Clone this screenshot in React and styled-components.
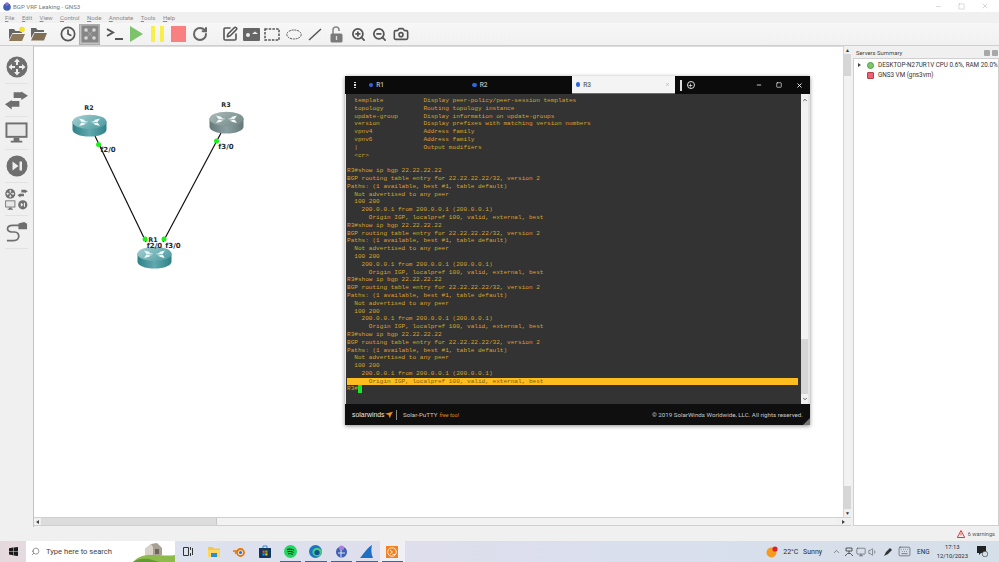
import React from 'react';
import styled, { createGlobalStyle } from 'styled-components';
import {
  ChevronUp,
  Clock,
  Keyboard,
  Monitor,
  Plus,
  RotateCw,
  Search,
  SquarePen,
  Volume1,
  X,
  ZoomIn,
  ZoomOut,
  Camera,
  Minus,
  Square,
} from 'lucide-react';

const GlobalStyle = createGlobalStyle`
  html, body {
    margin: 0;
    padding: 0;
    background: #f0f0f0;
  }
  * {
    box-sizing: border-box;
  }
`;

const Screen = styled.div`
  width: 999px;
  height: 562px;
  display: flex;
  flex-direction: column;
  overflow: hidden;
  font-family: Roboto, 'Open Sans', sans-serif;
  color: #333;
`;

const TitleBar = styled.div`
  height: 12px;
  flex: none;
  display: flex;
  align-items: center;
  background: #fff;
  padding-left: 3px;
  font-size: 6.1px;
  color: #777;
`;

const TitleText = styled.span`
  margin-left: 2px;
  flex: 1;
`;

const WinControls = styled.div`
  display: flex;
  align-items: center;
  gap: 16px;
  padding-right: 10px;
  color: #999;
`;

const MenuBar = styled.div`
  height: 11px;
  flex: none;
  display: flex;
  align-items: center;
  gap: 7.5px;
  padding-left: 5px;
  background: #f0f0f0;
  font-size: 6px;
  color: #8a8a8a;
`;

const MenuItem = styled.span`
  display: inline-block;
  &::first-letter {
    text-decoration: underline;
  }
`;

const Toolbar = styled.div`
  height: 23px;
  flex: none;
  display: flex;
  align-items: center;
  padding-left: 6.3px;
  background: linear-gradient(#f7f7f7, #f1f1f1);
  border-bottom: 1px solid #cfcfcf;
`;

const ToolButton = styled.div`
  width: 21.4px;
  height: 21px;
  flex: none;
  margin-left: ${props => props.$gap || 0}px;
  display: flex;
  align-items: center;
  justify-content: center;
  color: #5a5a5a;
  ${props => props.$active && 'background: #c2c2c2; border: 1px solid #adadad;'}
`;

const Main = styled.div`
  flex: 1;
  min-height: 0;
  display: flex;
`;

const LeftDock = styled.div`
  width: 34px;
  flex: none;
  display: flex;
  flex-direction: column;
  padding-top: 5px;
  background: #f0f0f0;
  border-right: 1px solid #c4c4c4;
`;

const DockItem = styled.div`
  height: 33px;
  margin: 0 5px;
  display: flex;
  align-items: center;
  justify-content: center;
  border-bottom: 1px solid #e2e2e2;
`;

const Center = styled.div`
  flex: 1;
  min-width: 0;
  display: flex;
  flex-direction: column;
  padding-bottom: 1px;
`;

const CanvasRow = styled.div`
  flex: 1;
  min-height: 0;
  display: flex;
`;

const Canvas = styled.div`
  flex: 1;
  position: relative;
  background: #fff;
  border-top: 1px solid #dcdcdc;
`;

const LinksLayer = styled.svg`
  position: absolute;
  left: -34px;
  top: -47px;
  width: 900px;
  height: 500px;
  pointer-events: none;
`;

const NodeImage = styled.svg`
  position: absolute;
  left: ${props => props.$x - 34}px;
  top: ${props => props.$y - 47}px;
`;

const NodeLabel = styled.span`
  position: absolute;
  left: ${props => props.$x - 34}px;
  top: ${props => props.$y - 47}px;
  transform: translate(-50%, -50%);
  font-family: 'DejaVu Sans', sans-serif;
  font-size: ${props => props.$size}px;
  font-weight: 700;
  color: #1c2a30;
  white-space: nowrap;
`;

const VScroll = styled.div`
  width: 8px;
  flex: none;
  display: flex;
  flex-direction: column;
  background: #f0f0f0;
  border-left: 1px solid #d4d4d4;
`;

const ScrollEnd = styled.div`
  flex: none;
  ${props => (props.$size ? `height: ${props.$size}px;` : '')}
  display: flex;
  align-items: center;
  justify-content: center;
  font-size: 5px;
  color: #333;
  background: ${props => (props.$thumb ? '#d6d6d6' : 'transparent')};
`;

const ScrollFill = styled.div`
  flex: 1;
  background: #f2f2f2;
`;

const HScroll = styled.div`
  height: 9px;
  flex: none;
  display: flex;
  background: #f0f0f0;
  border-top: 1px solid #d0d0d0;
  border-bottom: 1px solid #d0d0d0;
`;

const HScrollEnd = styled.div`
  flex: none;
  width: ${props => props.$size}px;
  display: flex;
  align-items: center;
  justify-content: center;
  background: ${props => (props.$thumb ? '#dcdcdc' : 'transparent')};
  border-right: ${props => (props.$thumb ? '1px solid #c8c8c8' : '0')};
`;

const RightDock = styled.div`
  width: 148px;
  flex: none;
  display: flex;
  flex-direction: column;
  padding-left: 2px;
  padding-bottom: 1px;
`;

const DockTitle = styled.div`
  height: 11px;
  flex: none;
  display: flex;
  align-items: center;
  justify-content: space-between;
  padding: 0 1px 0 3px;
  margin-top: 1px;
  font-size: 5.9px;
  color: #444;
`;

const DockButtons = styled.div`
  display: flex;
  gap: 2px;
`;

const DockButton = styled.span`
  width: 6px;
  height: 6px;
  background: #a8a8a8;
  border-radius: 1px;
`;

const ServerTree = styled.div`
  flex: 1;
  background: #fff;
  border: 1px solid #d0d0d0;
  padding-top: 1px;
`;

const ServerRow = styled.div`
  height: 10px;
  display: flex;
  align-items: center;
  padding-left: 4px;
  font-size: 6.3px;
  color: #333;
  white-space: nowrap;
`;

const Expander = styled.span`
  width: 0;
  height: 0;
  border-left: 3px solid #444;
  border-top: 2px solid transparent;
  border-bottom: 2px solid transparent;
  margin-right: ${props => (props.$flush ? 0 : 6)}px;
  ${props => props.$flip && 'transform: rotate(180deg);'}
`;

const ServerIcon = styled.span`
  width: 7px;
  height: 7px;
  margin-left: ${props => (props.$indent ? '9px' : '0')};
  margin-right: 4px;
  background: ${props => props.$color};
  border-radius: ${props => (props.$round ? '50%' : '1px')};
  border: 1px solid ${props => props.$edge};
  flex: none;
`;

const StatusBar = styled.div`
  height: 14px;
  flex: none;
  display: flex;
  align-items: center;
  justify-content: flex-end;
  gap: 2.5px;
  padding-right: 4px;
  background: #f0f0f0;
  font-size: 5.6px;
  color: #555;
`;

const Taskbar = styled.div`
  height: 21px;
  flex: none;
  display: flex;
  align-items: center;
  background: linear-gradient(90deg, #e6d9de 0, #dce2ee 180px, #dfdeec 400px, #dadfee 620px, #d5dfe9 100%);
  font-size: 7px;
  color: #2b2b33;
`;

const StartButton = styled.div`
  width: 26px;
  height: 100%;
  flex: none;
  display: flex;
  align-items: center;
  justify-content: center;
`;

const SearchBox = styled.div`
  width: 149px;
  height: 100%;
  flex: none;
  position: relative;
  overflow: hidden;
  display: flex;
  align-items: center;
  gap: 6px;
  padding-left: 5px;
  background: #fff;
  font-size: 7.6px;
  color: #444;
`;

const SearchArt = styled.svg`
  position: absolute;
  right: 0;
  bottom: 0;
`;

const TaskIcons = styled.div`
  display: flex;
  height: 100%;
  margin-left: 0.5px;
`;

const TaskIcon = styled.div`
  width: 25.5px;
  height: 100%;
  position: relative;
  display: flex;
  align-items: center;
  justify-content: center;
  background: ${props => (props.$active ? '#f0eff3' : 'transparent')};
  &::after {
    content: '';
    position: absolute;
    left: 2px;
    right: 2px;
    bottom: 0;
    height: 1.5px;
    background: ${props => (props.$running ? '#1a6fb5' : 'transparent')};
  }
`;

const Tray = styled.div`
  flex: 1;
  height: 100%;
  display: flex;
  align-items: center;
  justify-content: flex-end;
  padding-right: 11px;
`;

const Weather = styled.span`
  margin: 0 9.5px 0 5px;
  word-spacing: 3px;
`;

const TrayIcon = styled.span`
  display: flex;
  margin-right: ${props => props.$space}px;
  color: #333;
`;

const Clocks = styled.div`
  display: flex;
  flex-direction: column;
  align-items: center;
  line-height: 9px;
  font-size: 5.9px;
  margin: 0 9px 0 7px;
`;

const Lang = styled.span`
  font-size: 6.4px;
`;

/* Solar-PuTTY window sits on the canvas */
const TermWindow = styled.div`
  position: absolute;
  left: 311px;
  top: 29px;
  width: 465px;
  height: 349px;
  display: flex;
  flex-direction: column;
  box-shadow: 0 1px 4px rgba(0, 0, 0, 0.45);
  background: #e4e4e4;
`;

const TermHeader = styled.div`
  height: 18px;
  flex: none;
  display: flex;
  align-items: stretch;
  background: #0b0b0b;
  color: #fff;
`;

const MenuDots = styled.div`
  width: 19.7px;
  flex: none;
  display: flex;
  flex-direction: column;
  align-items: center;
  justify-content: center;
  gap: 1px;
  & > span {
    width: 1.5px;
    height: 1.5px;
    background: #ddd;
  }
`;

const Tab = styled.div`
  width: 103.5px;
  flex: none;
  display: flex;
  align-items: center;
  gap: 3px;
  padding-left: 4px;
  font-size: 6.6px;
  font-weight: 500;
  color: ${props => (props.$active ? '#666' : '#bdbdbd')};
  background: ${props => (props.$active ? '#f4f4f4' : 'transparent')};
  border-bottom: ${props => (props.$active ? '1.5px solid #3f6fd8' : '0')};
`;

const TabDot = styled.span`
  width: 4.5px;
  height: 4.5px;
  border-radius: 50%;
  background: #2f66e0;
`;

const TabClose = styled.span`
  margin-left: auto;
  margin-right: 5px;
  display: flex;
  color: #999;
`;

const AddTab = styled.div`
  flex: 1;
  display: flex;
  align-items: center;
  padding-left: 5px;
  gap: 5px;
`;

const TabSeparator = styled.span`
  width: 1.5px;
  height: 11px;
  background: #ddd;
`;

const AddCircle = styled.span`
  width: 8px;
  height: 8px;
  border: 1px solid #ddd;
  border-radius: 50%;
  display: flex;
  align-items: center;
  justify-content: center;
`;

const TermControls = styled.div`
  display: flex;
  align-items: center;
  gap: 14px;
  padding-right: 7px;
`;

const TermBody = styled.div`
  flex: 1;
  min-height: 0;
  display: flex;
  padding: 0 2px 0 1px;
`;

const TermScreen = styled.div`
  flex: 1;
  min-width: 0;
  padding: 3px 0 0 1px;
  background: #333333;
  overflow: hidden;
`;

const TermLine = styled.div`
  height: 7.8px;
  line-height: 7.8px;
  margin-right: 3px;
  font-family: 'Liberation Mono', monospace;
  font-size: 6.07px;
  white-space: pre;
  color: ${props => (props.$highlight ? '#7d5f10' : '#d9a22a')};
  background: ${props => (props.$highlight ? '#fdbd1e' : 'transparent')};
`;

const Cursor = styled.span`
  display: inline-block;
  width: 4px;
  height: 8px;
  vertical-align: top;
  background: #19e62a;
`;

const TermScroll = styled.div`
  width: 7px;
  flex: none;
  display: flex;
  flex-direction: column;
  background: #f0f0f0;
`;

const TermFooter = styled.div`
  height: 21px;
  flex: none;
  position: relative;
  display: flex;
  align-items: center;
  padding: 0 7px;
  background: #0f0f0f;
  color: #c9c9c9;
  font-size: 6.2px;
`;

const Brand = styled.span`
  font-family: 'Liberation Sans', sans-serif;
  font-size: 6.9px;
  color: #e8e8e8;
`;

const FooterDivider = styled.span`
  width: 1px;
  height: 10px;
  margin: 0 6px 0 3.5px;
  background: #888;
`;

const FreeTool = styled.span`
  margin-left: 2px;
  font-size: 5.4px;
  font-style: italic;
  color: #e28a1c;
`;

const Copyright = styled.span`
  margin-left: auto;
`;

const Grip = styled.svg`
  position: absolute;
  right: 0;
  bottom: 0;
`;

const pad = (name, desc) => ('  ' + name).padEnd(21, ' ') + desc;

const bgpBlock = [
  'R3#show ip bgp 22.22.22.22',
  'BGP routing table entry for 22.22.22.22/32, version 2',
  'Paths: (1 available, best #1, table default)',
  '  Not advertised to any peer',
  '  100 200',
  '    200.0.0.1 from 200.0.0.1 (200.0.0.1)',
  '      Origin IGP, localpref 100, valid, external, best',
];

const termLines = [
  pad('template', 'Display peer-policy/peer-session templates'),
  pad('topology', 'Routing topology instance'),
  pad('update-group', 'Display information on update-groups'),
  pad('version', 'Display prefixes with matching version numbers'),
  pad('vpnv4', 'Address family'),
  pad('vpnv6', 'Address family'),
  pad('|', 'Output modifiers'),
  '  <cr>',
  '',
  ...bgpBlock,
  ...bgpBlock,
  ...bgpBlock,
  ...bgpBlock,
];

const menus = ['File', 'Edit', 'View', 'Control', 'Node', 'Annotate', 'Tools', 'Help'];

const routers = [
  { id: 'R2', x: 72, y: 114, grey: false },
  { id: 'R3', x: 209, y: 111, grey: true },
  { id: 'R1', x: 137, y: 246, grey: false },
];

const labels = [
  { text: 'R2', x: 89, y: 108, size: 6.4 },
  { text: 'R3', x: 226, y: 105, size: 6.4 },
  { text: 'R1', x: 153, y: 239.5, size: 6.4 },
  { text: 'f2/0', x: 108, y: 150, size: 7 },
  { text: 'f3/0', x: 226, y: 147, size: 7 },
  { text: 'f2/0', x: 154.5, y: 245.5, size: 7 },
  { text: 'f3/0', x: 173, y: 245.5, size: 7 },
];

const links = [
  { x1: 95, y1: 136, x2: 146, y2: 242 },
  { x1: 221, y1: 133, x2: 163, y2: 242 },
];

const dots = [
  [98.5, 144.5],
  [216.5, 141],
  [145, 239],
  [164, 239],
];

const GRAY = '#6f6f6f';

const RouterIcon = ({ x, y, grey, id }) => {
  const side = grey ? '#66787a' : '#2f8289';
  const light = grey ? '#8aa0a0' : '#5fa8ae';
  const topLight = grey ? '#a9baba' : '#a8d2d4';
  const topDark = grey ? '#7a8e8e' : '#55a0a5';
  return (
    <NodeImage $x={x} $y={y} width="35" height="23" viewBox="0 0 35 25" preserveAspectRatio="none">
      <defs>
        <linearGradient id={`side-${id}`} x1="0" x2="1">
          <stop offset="0" stopColor={side} />
          <stop offset="0.5" stopColor={light} />
          <stop offset="1" stopColor={side} />
        </linearGradient>
        <linearGradient id={`top-${id}`} x1="0" x2="1" y1="0" y2="0.6">
          <stop offset="0" stopColor={topLight} />
          <stop offset="1" stopColor={topDark} />
        </linearGradient>
      </defs>
      <path d="M0.5 8v9c0 4 7.5 7.5 17 7.5s17-3.500 17-7.500V8z" fill={`url(#side-${id})`} />
      <ellipse cx="17.500" cy="8.500" rx="17" ry="7.800" fill={`url(#top-${id})`} />
      <path
        d="M7 5l6 1.500-1 1 4 1-1 1-4-1-1 1zM28 5l-6 1.500 1 1-4 1 1 1 4-1 1 1zM7 13l6-1.500-1-1 4-1-1-1-4 1-1-1zM28 13l-6-1.500 1-1-4-1 1-1 4 1 1-1z"
        fill="#f4fafa"
      />
    </NodeImage>
  );
};

const RouterDiscInner = () => (
  <>
    <circle cx="11" cy="11" r="10.500" fill={GRAY} />
    <path
      d="M11 2.500l3 3.500h-2v3h-2V6H8zM11 19.500l3-3.500h-2v-3h-2v3H8zM2.500 11L6 8v2h3v2H6v2zM19.500 11L16 8v2h-3v2h3v2z"
      fill="#eee"
    />
  </>
);

const RouterDisc = () => (
  <svg width="22" height="22" viewBox="0 0 22 22">
    <RouterDiscInner />
  </svg>
);

const ArrowsInner = () => (
  <>
    <path d="M9 1h8V0l7 4.500-7 4.500V7H9z" fill={GRAY} />
    <path d="M15 10H7V9l-7 4.500L7 19v-3h8z" fill={GRAY} />
  </>
);

const SwitchArrows = () => (
  <svg width="24" height="19" viewBox="0 0 24 19">
    <ArrowsInner />
  </svg>
);

const MonitorInner = () => (
  <>
    <rect x="0.500" y="1" width="23" height="16" fill={GRAY} />
    <rect x="2.500" y="3" width="19" height="12" fill="#e8e8e8" />
    <path d="M9 17h6v3h3v2H6v-2h3z" fill={GRAY} />
  </>
);

const MonitorIcon = () => (
  <svg width="24" height="24" viewBox="0 0 24 24">
    <MonitorInner />
  </svg>
);

const SkipInner = () => (
  <>
    <circle cx="11" cy="11" r="10.500" fill={GRAY} />
    <path d="M6.500 6.500l6 4.500-6 4.500z" fill="#eee" />
    <rect x="13.500" y="6.500" width="2.500" height="9" fill="#eee" />
  </>
);

const SkipDisc = () => (
  <svg width="22" height="22" viewBox="0 0 22 22">
    <SkipInner />
  </svg>
);

const AllDevices = () => (
  <svg width="24" height="24" viewBox="0 0 24 24">
    <g transform="translate(0 1) scale(0.5)">
      <RouterDiscInner />
    </g>
    <g transform="translate(13 2) scale(0.45)">
      <ArrowsInner />
    </g>
    <g transform="translate(0 13) scale(0.46)">
      <MonitorInner />
    </g>
    <g transform="translate(13.500 13) scale(0.46)">
      <SkipInner />
    </g>
  </svg>
);

const CableIcon = () => (
  <svg width="24" height="24" viewBox="0 0 24 24">
    <path d="M16 5H8C1 5 1 12 7 12h3c6 0 6 9-1 9H2" fill="none" stroke={GRAY} strokeWidth="1.800" />
    <path d="M14 3l6-1.500 3 2V9h-9z" fill={GRAY} />
  </svg>
);

const NewProjectIcon = () => (
  <svg width="18" height="16" viewBox="0 0 18 16">
    <path d="M1 3h5l1.500 2H14v2H4.500L1 13.500z" fill="#666" />
    <path d="M4.500 8H17l-3 7H1z" fill="#8c7a5a" />
    <circle cx="14" cy="3.500" r="2.800" fill="#f7e22a" />
  </svg>
);

const OpenIcon = () => (
  <svg width="17" height="14" viewBox="0 0 17 14">
    <path d="M1 1h5l1.500 2H14v2H4.500L1 11z" fill="#666" />
    <path d="M4.500 6H17l-3 7.500H1z" fill="#806f54" />
  </svg>
);

const SnapshotIcon = () => (
  <svg width="18" height="18" viewBox="0 0 18 18">
    <rect x="0.500" y="0.500" width="17" height="17" fill="#868686" />
    <path d="M5 5l8 8M13 5l-8 8" stroke="#a8a8a8" strokeWidth="0.800" />
    <circle cx="5" cy="5" r="1.800" fill="#d8d8d8" />
    <circle cx="13" cy="5" r="1.800" fill="#d8d8d8" />
    <circle cx="5" cy="13" r="1.800" fill="#d8d8d8" />
    <circle cx="13" cy="13" r="1.800" fill="#d8d8d8" />
  </svg>
);

const ConsoleIcon = () => (
  <svg width="17" height="13" viewBox="0 0 17 13">
    <path d="M1 1l6 3.500L1 8" fill="none" stroke="#555" strokeWidth="2" />
    <rect x="9" y="10" width="8" height="2" fill="#555" />
  </svg>
);

const PlayIcon = () => (
  <svg width="13" height="16" viewBox="0 0 13 16">
    <path d="M0 0l13 8-13 8z" fill="#7dc36b" />
  </svg>
);

const PauseIcon = () => (
  <svg width="13" height="16" viewBox="0 0 13 16">
    <rect x="0" y="0" width="4" height="16" fill="#f7f04a" />
    <rect x="9" y="0" width="4" height="16" fill="#f7f04a" />
  </svg>
);

const StopIcon = () => (
  <svg width="15" height="16" viewBox="0 0 15 16">
    <rect width="15" height="16" fill="#f98080" />
  </svg>
);

const PictureIcon = () => (
  <svg width="17" height="13" viewBox="0 0 17 13">
    <rect width="17" height="13" rx="1" fill="#666" />
    <circle cx="5" cy="7" r="2" fill="#eee" />
    <path d="M9 6l3-2.500L15 6z" fill="#eee" />
  </svg>
);

const RectIcon = () => (
  <svg width="16" height="13" viewBox="0 0 16 13">
    <rect x="1" y="1" width="14" height="11" fill="none" stroke="#555" strokeWidth="1.500" strokeDasharray="2.500 1.200" />
  </svg>
);

const EllipseIcon = () => (
  <svg width="16" height="11" viewBox="0 0 16 11">
    <ellipse cx="8" cy="5.500" rx="7.200" ry="4.500" fill="none" stroke="#555" strokeWidth="1" strokeDasharray="2 0.800" />
  </svg>
);

const LineIcon = () => (
  <svg width="14" height="13" viewBox="0 0 14 13">
    <path d="M1 12L13 1" stroke="#555" strokeWidth="1.500" />
  </svg>
);

const LockIcon = () => (
  <svg width="14" height="17" viewBox="0 0 14 17">
    <path d="M3 8V4a3 3 0 016 0v1" fill="none" stroke="#8a8a8a" strokeWidth="1.600" />
    <rect x="0.500" y="7.500" width="12" height="9" rx="1.500" fill="#7a7a7a" />
    <rect x="5.800" y="10" width="1.400" height="4" fill="#ddd" />
  </svg>
);

const tools = [
  { key: 'new', icon: <NewProjectIcon /> },
  { key: 'open', icon: <OpenIcon /> },
  { key: 'clock', gap: 8.6, icon: <Clock size={16} strokeWidth={2.6} color="#555" /> },
  { key: 'snap', active: true, icon: <SnapshotIcon /> },
  { key: 'console', gap: 3.6, icon: <ConsoleIcon /> },
  { key: 'play', icon: <PlayIcon /> },
  { key: 'pause', icon: <PauseIcon /> },
  { key: 'stop', icon: <StopIcon /> },
  { key: 'reload', icon: <RotateCw size={16} strokeWidth={3} color="#666" /> },
  { key: 'note', gap: 8, icon: <SquarePen size={16} strokeWidth={2.4} color="#555" /> },
  { key: 'picture', icon: <PictureIcon /> },
  { key: 'rect', icon: <RectIcon /> },
  { key: 'ellipse', icon: <EllipseIcon /> },
  { key: 'line', icon: <LineIcon /> },
  { key: 'lock', icon: <LockIcon /> },
  { key: 'zin', icon: <ZoomIn size={15} strokeWidth={2.8} color="#555" /> },
  { key: 'zout', icon: <ZoomOut size={15} strokeWidth={2.8} color="#555" /> },
  { key: 'camera', icon: <Camera size={16} strokeWidth={2.4} color="#555" /> },
];

const WinLogo = () => (
  <svg width="9" height="9" viewBox="0 0 9 9">
    <path d="M0 1.200l4-.6v3.500H0zM4.500.5L9 0v4.100H4.500zM0 4.600h4v3.600l-4-.6zM4.500 4.600H9V9l-4.500-.6z" fill="#1a1a1a" />
  </svg>
);

const BarnArt = () => (
  <SearchArt width="42" height="21" viewBox="0 0 42 21">
    <path d="M0 21c6-7 16-8 26-7 6 .5 12 1 16 0v7z" fill="#8dba4a" />
    <path d="M0 21c4-3 10-4 16-3l10 3z" fill="#5f9a35" />
    <path d="M12 8l6-5 6-1 5 5v7H12z" fill="#a89f95" />
    <path d="M12 8l6-5 2 3v8h-8z" fill="#d8d2c8" />
    <path d="M22 8h4v5h-4z" fill="#6d655c" />
  </SearchArt>
);

const TaskViewIcon = () => (
  <svg width="10" height="9" viewBox="0 0 10 9">
    <path d="M0.500 0.500h5v8h-5zM7.500 0v3M7.500 6v3M9.500 1v7" fill="none" stroke="#333" strokeWidth="1" />
  </svg>
);

const ExplorerIcon = () => (
  <svg width="12" height="10" viewBox="0 0 12 10">
    <path d="M0 0h5l1 1.500h6V10H0z" fill="#f6c944" />
    <rect y="3" width="12" height="7" fill="#fbd765" />
    <rect x="3" y="6" width="6" height="4" fill="#2a8bd6" />
  </svg>
);

const BlenderIcon = () => (
  <svg width="12" height="10" viewBox="0 0 12 10">
    <circle cx="7.500" cy="5.500" r="3.500" fill="none" stroke="#ea7600" strokeWidth="1.800" />
    <circle cx="7.500" cy="5.500" r="1.500" fill="#2a6fb5" />
    <path d="M0 4h5M2 6.500L6 2" stroke="#ea7600" strokeWidth="1.300" />
  </svg>
);

const StoreIcon = () => (
  <svg width="12" height="13" viewBox="0 0 12 13">
    <path d="M0 3h12v9a1 1 0 01-1 1H1a1 1 0 01-1-1z" fill="#12365e" />
    <path d="M4 3V1h4v2" fill="none" stroke="#2a8bd6" />
    <rect x="3.500" y="5.500" width="2.200" height="2.200" fill="#f25022" />
    <rect x="6.300" y="5.500" width="2.200" height="2.200" fill="#7fba00" />
    <rect x="3.500" y="8.300" width="2.200" height="2.200" fill="#00a4ef" />
    <rect x="6.300" y="8.300" width="2.200" height="2.200" fill="#ffb900" />
  </svg>
);

const SpotifyIcon = () => (
  <svg width="13" height="13" viewBox="0 0 13 13">
    <circle cx="6.500" cy="6.500" r="6.500" fill="#1ed760" />
    <path d="M3 4.500c2.500-.7 5-.4 7 .7M3.500 6.700c2-.5 4.200-.3 6 .7M4 8.800c1.700-.4 3.400-.2 4.800.6" fill="none" stroke="#111" strokeWidth="1" />
  </svg>
);

const EdgeIcon = () => (
  <svg width="13" height="13" viewBox="0 0 13 13">
    <circle cx="6.500" cy="6.500" r="6.500" fill="#1b74c4" />
    <path d="M13 7c0-2.500-2.500-4-5-4-3 0-5 2-4.500 5C4 11 8 12.500 11 11" fill="#4ccb7a" />
    <circle cx="8" cy="7.500" r="2.600" fill="#0f4f95" />
  </svg>
);

const GnsIcon = () => (
  <svg width="11" height="13" viewBox="0 0 11 13">
    <circle cx="5.500" cy="7" r="5.500" fill="#3f5fb4" />
    <circle cx="5.500" cy="3" r="2.500" fill="#a880d8" />
    <path d="M2 8h7M5 5v7" stroke="#dfe5f4" strokeWidth="1" />
  </svg>
);

const SharkIcon = () => (
  <svg width="13" height="13" viewBox="0 0 13 13">
    <path d="M0 13C3 10 6 4 12 0c-1 4-1 9 1 13z" fill="#1f6fc4" />
  </svg>
);

const PuttyIcon = () => (
  <svg width="12" height="12" viewBox="0 0 12 12">
    <rect width="12" height="12" fill="#f58220" />
    <circle cx="6" cy="6" r="4.300" fill="none" stroke="#fff" strokeWidth="0.800" />
    <path d="M4 4l2.500 2L4 8M6.500 8.500H9" fill="none" stroke="#fff" strokeWidth="0.800" />
  </svg>
);

const taskApps = [
  { key: 'tasks', icon: <TaskViewIcon /> },
  { key: 'explorer', icon: <ExplorerIcon /> },
  { key: 'blender', icon: <BlenderIcon /> },
  { key: 'store', icon: <StoreIcon /> },
  { key: 'spotify', running: true, icon: <SpotifyIcon /> },
  { key: 'edge', running: true, icon: <EdgeIcon /> },
  { key: 'gns3', running: true, icon: <GnsIcon /> },
  { key: 'shark', running: true, icon: <SharkIcon /> },
  { key: 'putty', running: true, active: true, icon: <PuttyIcon /> },
];

const SolarBird = () => (
  <svg width="8" height="8" viewBox="0 0 10 8">
    <path d="M0 2.500L10 0 7.500 4 6 8 4.500 4z" fill="#f0901e" />
  </svg>
);

const SunBadge = () => (
  <svg width="12" height="12" viewBox="0 0 12 12">
    <circle cx="5.500" cy="6.500" r="5" fill="#f79a1e" />
    <circle cx="9" cy="3" r="2.600" fill="#d9232e" />
  </svg>
);

const NetworkIcon = () => (
  <svg width="10" height="10" viewBox="0 0 10 10">
    <path d="M2 1h6v3H2zM5 4v2M1 9l2.500-2.500h3L9 9" fill="none" stroke="#333" strokeWidth="0.800" />
  </svg>
);

const PenIcon = () => (
  <svg width="10" height="10" viewBox="0 0 10 10">
    <path d="M1 9l2-4 4-4 2 2-4 4z" fill="#333" />
  </svg>
);

const NotifyIcon = () => (
  <svg width="11" height="11" viewBox="0 0 11 11">
    <path d="M0 0h9v7H4L2 9V7H0z" fill="#222" />
    <circle cx="8" cy="8" r="2.800" fill="#d5dfe9" stroke="#333" strokeWidth="0.600" />
  </svg>
);

const WarnIcon = () => (
  <svg width="8" height="8" viewBox="0 0 8 8">
    <path d="M4 0.500L7.700 7.500H.3z" fill="none" stroke="#d83b3b" strokeWidth="1" />
    <path d="M4 3v2.500" stroke="#d83b3b" strokeWidth="0.800" />
  </svg>
);

const GnsLogo = () => (
  <svg width="8" height="9" viewBox="0 0 8 9">
    <circle cx="4" cy="5" r="3.800" fill="#3f5fb4" />
    <circle cx="4" cy="2" r="1.800" fill="#8f6ccf" />
  </svg>
);

export default function App() {
  return (
    <Screen>
      <GlobalStyle />
      <TitleBar>
        <GnsLogo />
        <TitleText>BGP VRF Leaking - GNS3</TitleText>
        <WinControls>
          <Minus size={7} strokeWidth={1.2} />
          <Square size={7} strokeWidth={1.2} />
          <X size={8} strokeWidth={1.2} />
        </WinControls>
      </TitleBar>
      <MenuBar>
        {menus.map(m => (
          <MenuItem key={m}>{m}</MenuItem>
        ))}
      </MenuBar>
      <Toolbar>
        {tools.map(t => (
          <ToolButton key={t.key} $gap={t.gap} $active={t.active}>
            {t.icon}
          </ToolButton>
        ))}
      </Toolbar>
      <Main>
        <LeftDock>
          <DockItem>
            <RouterDisc />
          </DockItem>
          <DockItem>
            <SwitchArrows />
          </DockItem>
          <DockItem>
            <MonitorIcon />
          </DockItem>
          <DockItem>
            <SkipDisc />
          </DockItem>
          <DockItem>
            <AllDevices />
          </DockItem>
          <DockItem>
            <CableIcon />
          </DockItem>
        </LeftDock>
        <Center>
          <CanvasRow>
            <Canvas>
              <LinksLayer viewBox="0 0 900 500">
                {links.map(l => (
                  <line key={l.x1} {...l} stroke="#111" strokeWidth="1.200" />
                ))}
              </LinksLayer>
              {routers.map(r => (
                <RouterIcon key={r.id} id={r.id} x={r.x} y={r.y} grey={r.grey} />
              ))}
              <LinksLayer viewBox="0 0 900 500">
                {dots.map(([cx, cy]) => (
                  <circle key={cx} cx={cx} cy={cy} r="2.500" fill="#1bf01b" />
                ))}
              </LinksLayer>
              {labels.map(l => (
                <NodeLabel key={l.text + l.x} $x={l.x} $y={l.y} $size={l.size}>
                  {l.text}
                </NodeLabel>
              ))}
              <TermWindow>
                <TermHeader>
                  <MenuDots>
                    <span />
                    <span />
                    <span />
                  </MenuDots>
                  <Tab>
                    <TabDot />
                    R1
                  </Tab>
                  <Tab>
                    <TabDot />
                    R2
                  </Tab>
                  <Tab $active>
                    <TabDot />
                    R3
                    <TabClose>
                      <X size={5} strokeWidth={2} />
                    </TabClose>
                  </Tab>
                  <AddTab>
                    <TabSeparator />
                    <AddCircle>
                      <Plus size={5} strokeWidth={3} />
                    </AddCircle>
                  </AddTab>
                  <TermControls>
                    <Minus size={6} strokeWidth={3} />
                    <Square size={6} strokeWidth={2.5} />
                    <X size={7} strokeWidth={3} />
                  </TermControls>
                </TermHeader>
                <TermBody>
                  <TermScreen>
                    {termLines.map((line, i) => (
                      <TermLine key={i} $highlight={i === termLines.length - 1}>
                        {line}
                      </TermLine>
                    ))}
                    <TermLine>
                      R3#
                      <Cursor />
                    </TermLine>
                  </TermScreen>
                  <TermScroll>
                    <ScrollEnd $size={11}>
                      <ChevronUp size={6} strokeWidth={3} />
                    </ScrollEnd>
                    <ScrollFill />
                    <ScrollEnd $thumb $size={55} />
                    <ScrollEnd $size={10}>
                      <ChevronUp size={6} strokeWidth={3} style={{ transform: 'rotate(180deg)' }} />
                    </ScrollEnd>
                  </TermScroll>
                </TermBody>
                <TermFooter>
                  <Brand>solarwinds</Brand>
                  <SolarBird />
                  <FooterDivider />
                  <span>Solar-PuTTY</span>
                  <FreeTool>free tool</FreeTool>
                  <Copyright>© 2019 SolarWinds Worldwide, LLC. All rights reserved.</Copyright>
                  <Grip width="7" height="7" viewBox="0 0 7 7">
                    <path d="M7 0v7H0z" fill="#777" />
                  </Grip>
                </TermFooter>
              </TermWindow>
            </Canvas>
            <VScroll>
              <ScrollEnd $size={8}>▲</ScrollEnd>
              <ScrollEnd $thumb $size={22} />
              <ScrollFill />
              <ScrollEnd $thumb $size={23} />
              <ScrollEnd $size={8}>▼</ScrollEnd>
            </VScroll>
          </CanvasRow>
          <HScroll>
            <HScrollEnd $size={7}>
              <Expander $flush $flip />
            </HScrollEnd>
            <HScrollEnd $thumb $size={176} />
            <ScrollFill />
            <HScrollEnd $size={15}>
              <Expander $flush />
            </HScrollEnd>
          </HScroll>
        </Center>
        <RightDock>
          <DockTitle>
            Servers Summary
            <DockButtons>
              <DockButton />
              <DockButton />
            </DockButtons>
          </DockTitle>
          <ServerTree>
            <ServerRow>
              <Expander />
              <ServerIcon $round $color="#7cc96a" $edge="#4a9a48" />
              DESKTOP-N27UR1V CPU 0.6%, RAM 20.0%
            </ServerRow>
            <ServerRow>
              <ServerIcon $indent $color="#ee5f6f" $edge="#b8404c" />
              GNS3 VM (gns3vm)
            </ServerRow>
          </ServerTree>
        </RightDock>
      </Main>
      <StatusBar>
        <WarnIcon />
        6 warnings
      </StatusBar>
      <Taskbar>
        <StartButton>
          <WinLogo />
        </StartButton>
        <SearchBox>
          <Search size={9} strokeWidth={1.4} style={{ transform: 'scaleX(-1)' }} />
          Type here to search
          <BarnArt />
        </SearchBox>
        <TaskIcons>
          {taskApps.map(a => (
            <TaskIcon key={a.key} $running={a.running} $active={a.active}>
              {a.icon}
            </TaskIcon>
          ))}
        </TaskIcons>
        <Tray>
          <SunBadge />
          <Weather>22°C Sunny</Weather>
          <TrayIcon $space={3.5}>
            <ChevronUp size={9} strokeWidth={1.4} />
          </TrayIcon>
          <TrayIcon $space={2}>
            <NetworkIcon />
          </TrayIcon>
          <TrayIcon $space={2}>
            <Monitor size={10} strokeWidth={1.2} />
          </TrayIcon>
          <TrayIcon $space={5}>
            <Volume1 size={10} strokeWidth={1.2} />
          </TrayIcon>
          <TrayIcon $space={5}>
            <PenIcon />
          </TrayIcon>
          <TrayIcon $space={6}>
            <Keyboard size={13} strokeWidth={1} />
          </TrayIcon>
          <Lang>ENG</Lang>
          <Clocks>
            <span>17:13</span>
            <span>12/10/2023</span>
          </Clocks>
          <NotifyIcon />
        </Tray>
      </Taskbar>
    </Screen>
  );
}
